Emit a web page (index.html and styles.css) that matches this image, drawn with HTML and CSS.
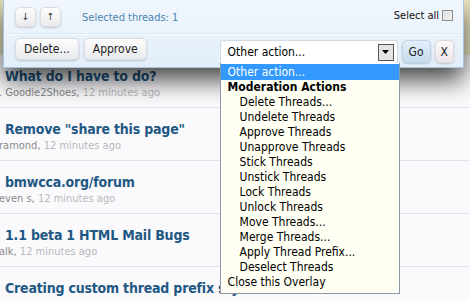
FILE: index.html
```html
<!DOCTYPE html>
<html>
<head>
<meta charset="utf-8">
<link rel="stylesheet" href="styles.css">
</head>
<body>
<div class="page-head"></div>
<ol class="threads">
  <li class="thread">
    <a class="title">What do I have to do?</a>
    <div class="meta"><span class="user">. Goodie2Shoes</span>, <span class="time">12 minutes ago</span></div>
  </li>
  <li class="thread">
    <a class="title">Remove "share this page"</a>
    <div class="meta"><span class="user">ramond</span>, <span class="time">12 minutes ago</span></div>
  </li>
  <li class="thread">
    <a class="title">bmwcca.org/forum</a>
    <div class="meta"><span class="user">even s</span>, <span class="time">12 minutes ago</span></div>
  </li>
  <li class="thread">
    <a class="title">1.1 beta 1 HTML Mail Bugs</a>
    <div class="meta"><span class="user">alk</span>, <span class="time">12 minutes ago</span></div>
  </li>
  <li class="thread">
    <a class="title">Creating custom thread prefix styles</a>
  </li>
</ol>

<div class="overlay">
  <div class="ov-row ov-top">
    <div class="nav-btns">
      <button class="btn small">&#8595;</button>
      <button class="btn small">&#8593;</button>
    </div>
    <span class="selected">Selected threads: 1</span>
    <label class="select-all">Select all <span class="checkbox"></span></label>
  </div>
  <div class="ov-row ov-bottom">
    <div class="actions">
      <button class="btn">Delete...</button>
      <button class="btn">Approve</button>
    </div>
    <div class="select-wrap">
      <div class="select">
        <span class="select-text">Other action...</span>
        <span class="select-arrow"><svg width="7" height="4" viewBox="0 0 7 4"><path d="M0 0H7L3.5 4Z" fill="#000"/></svg></span>
      </div>
      <ul class="dropdown">
        <li class="opt hl">Other action...</li>
        <li class="opt group">Moderation Actions</li>
        <li class="opt sub">Delete Threads...</li>
        <li class="opt sub">Undelete Threads</li>
        <li class="opt sub">Approve Threads</li>
        <li class="opt sub">Unapprove Threads</li>
        <li class="opt sub">Stick Threads</li>
        <li class="opt sub">Unstick Threads</li>
        <li class="opt sub">Lock Threads</li>
        <li class="opt sub">Unlock Threads</li>
        <li class="opt sub">Move Threads...</li>
        <li class="opt sub">Merge Threads...</li>
        <li class="opt sub">Apply Thread Prefix...</li>
        <li class="opt sub">Deselect Threads</li>
        <li class="opt">Close this Overlay</li>
      </ul>
    </div>
    <button class="btn go">Go</button>
    <button class="btn close">X</button>
  </div>
</div>
</body>
</html>
```

FILE: styles.css
```css
html, body {
  margin: 0;
  padding: 0;
}
body {
  width: 470px;
  height: 300px;
  overflow: hidden;
  position: relative;
  background: #fafafd;
  font-family: "DejaVu Sans Condensed", "Liberation Sans", sans-serif;
  font-size: 12px;
  color: #000;
}
.page-head {
  height: 55px;
  background: linear-gradient(90deg, #e8e1b9 0px, #efe9c9 4px, #f7f2d6 460px, #efe7c0 470px);
}
.threads {
  list-style: none;
  margin: 0;
  padding: 0;
}
.thread {
  height: 52px;
  border-bottom: 1px solid #dbe6ee;
  overflow: hidden;
  white-space: nowrap;
}
.title {
  display: block;
  padding: 12px 0 0 5px;
  font-size: 14px;
  letter-spacing: -0.2px;
  font-weight: bold;
  line-height: 18px;
  color: #1f5883;
}
.meta {
  margin: 1px 0 0 -1px;
  font-size: 11px;
  line-height: 14px;
  color: #8a8a8a;
}
.meta .time {
  color: #b8b8b8;
}

/* overlay */
.overlay {
  position: absolute;
  left: 3px;
  top: -1px;
  width: 459px;
  border: 1px solid #a9c5de;
  border-top: 0;
  background: #e8f1fa;
  box-shadow: 0 12px 24px rgba(0, 0, 0, 0.72);
}
.ov-row {
  display: flex;
  align-items: center;
  box-sizing: border-box;
}
.ov-top {
  height: 35px;
  padding: 2px 10px 0 11px;
  background: linear-gradient(#f0f6fc, #ebf3fb);
  border-bottom: 1px solid #dce8f3;
}
.ov-bottom {
  height: 33px;
  padding: 1px 9px 0 11px;
  background: linear-gradient(#e9f2fb, #e2eef9);
  border-top: 1px solid #f8fbfe;
  align-items: flex-start;
}
.nav-btns, .actions {
  display: flex;
  gap: 4px;
}
.actions {
  gap: 5px;
  margin-top: 2px;
}
.btn {
  font-family: inherit;
  font-size: 12px;
  color: #222;
  height: 22px;
  padding: 0 8px;
  border: 1px solid #dcdde0;
  border-radius: 5px;
  background: linear-gradient(#fdfdfd, #e9eaec);
  box-shadow: 0 1px 2px rgba(0, 0, 0, 0.18);
  line-height: 20px;
  margin: 0;
}
.btn.small {
  width: 21px;
  height: 20px;
  padding: 0;
  font-size: 10px;
  color: #333;
  line-height: 18px;
}
.selected {
  margin-left: 21px;
  font-size: 11px;
  color: #4a86b3;
}
.select-all {
  margin-left: auto;
  display: flex;
  align-items: center;
  gap: 3px;
  font-size: 11px;
  color: #111;
  margin-top: -4px;
}
.checkbox {
  width: 9px;
  height: 9px;
  border: 1px solid #8d8d8d;
  background: linear-gradient(135deg, #d8d8d8, #f6f6f6);
  box-shadow: inset 0 0 0 1px #ececec;
}
.select-wrap {
  position: relative;
  margin-left: auto;
  margin-top: 4px;
  width: 178px;
}
.select {
  height: 23px;
  box-sizing: border-box;
  display: flex;
  align-items: center;
  padding: 0 3px 0 7px;
  background: #fff;
  border: 1px solid #d2dbe4;
  border-bottom: 0;
  border-radius: 3px 3px 0 0;
}
.select-text {
  flex: 1;
}
.select-arrow {
  width: 14px;
  height: 15px;
  border: 1px solid #555;
  background: #e4e4e4;
  display: flex;
  align-items: center;
  justify-content: center;
}
.dropdown {
  position: absolute;
  left: 0;
  top: 23px;
  width: 180px;
  box-sizing: border-box;
  margin: 0;
  padding: 1px 0 3px;
  list-style: none;
  background: #fffff3;
  border: 1px solid #8898a6;
  border-top: 0;
  z-index: 2;
}
.opt {
  height: 15px;
  line-height: 15px;
  padding-left: 7px;
  white-space: nowrap;
  color: #000;
}
.opt.hl {
  height: 16px;
  line-height: 16px;
  background: #3399ff;
  color: #fff;
}
.opt.group {
  font-weight: bold;
}
.opt.sub {
  padding-left: 19px;
}
.btn.go {
  margin-left: 4px;
  margin-top: 4px;
  padding: 0 6px;
  height: 23px;
  background: linear-gradient(#e4eff9, #c5dbed);
  border-color: #bed3e6;
}
.btn.close {
  margin-left: 4px;
  margin-top: 4px;
  padding: 0 5px;
  height: 23px;
  background: linear-gradient(#fcfafb, #ece5e9);
  border-color: #e0d8dd;
}
```
